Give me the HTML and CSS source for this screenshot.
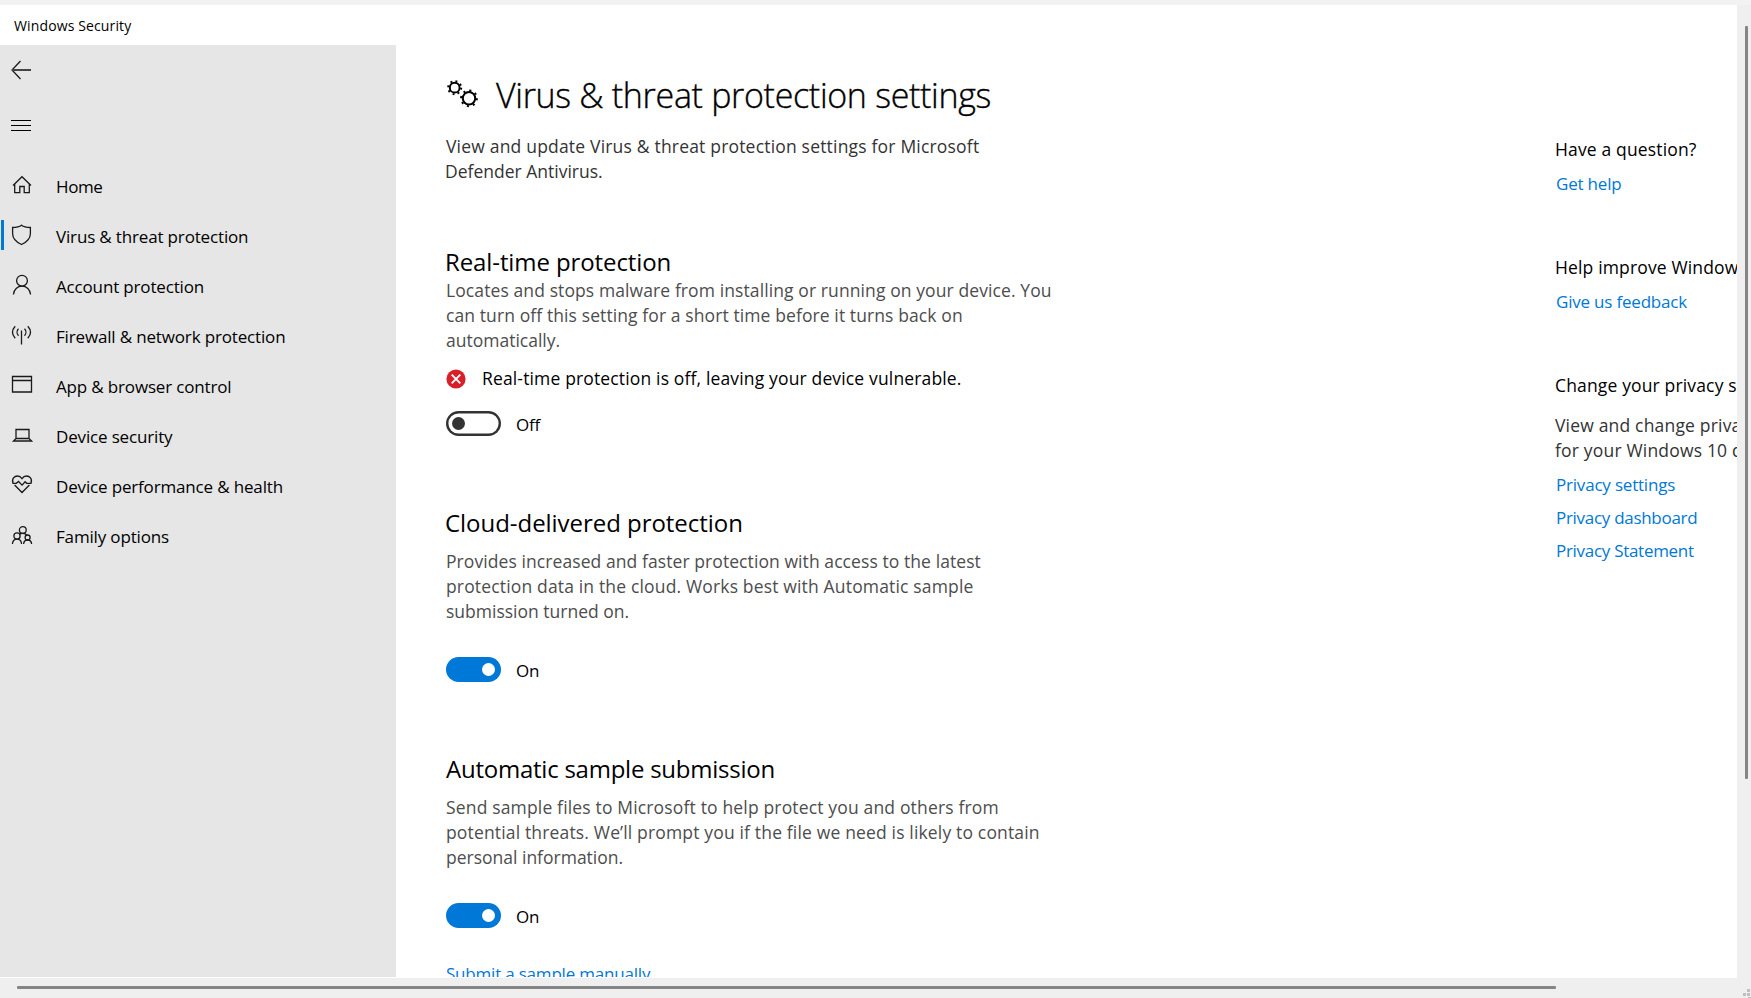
FILE: index.html
```html
<!DOCTYPE html>
<html lang="en">
<head>
<meta charset="utf-8">
<title>Windows Security</title>
<link rel="stylesheet" href="styles.css">
</head>
<body>
<div class="window">
  <header class="titlebar">Windows Security</header>
  <div class="body">
    <nav class="sidebar">
      <svg class="back" width="20" height="20" viewBox="0 0 20 20"><path d="M9.5 1 1 10l8.500 9"/><path class="shaft" d="M1 10h19"/></svg>
      <div class="burger"><i></i><i></i><i></i></div>
      <ul class="menu">
        <li class="item short"><svg class="icon" viewBox="0 0 22 22"><path d="M2 11.500 11 2.700l9 8.800M3.700 10v8.700h5.100v-6.200h4.400v6.200h5.100V10"/></svg><span>Home</span></li>
        <li class="item active"><svg class="icon" viewBox="0 0 22 22"><path d="M10.500 1.200C8 3.200 5 3.500 1.600 3.500v6c0 5 3.200 8.400 8.900 11 5.700-2.600 8.900-6 8.900-11v-6C16 3.500 13 3.200 10.500 1.200z"/></svg><span>Virus &amp; threat protection</span></li>
        <li class="item"><svg class="icon" viewBox="0 0 22 22"><circle cx="11" cy="6.700" r="5.400"/><path d="M2.400 20.500c.5-5 4-8.300 8.600-8.300s8.100 3.300 8.600 8.300"/></svg><span>Account protection</span></li>
        <li class="item"><svg class="icon" viewBox="0 0 22 22"><path d="M10.500 6.500v14M4.200 2.300C.8 6 .8 10.500 4.200 14.300M7.500 4.800c-1.900 2-1.900 5 0 7M16.800 2.300c3.400 3.700 3.400 8.200 0 12M13.500 4.800c1.900 2 1.900 5 0 7"/></svg><span>Firewall &amp; network protection</span></li>
        <li class="item"><svg class="icon" viewBox="0 0 22 22"><path d="M1.500 2.500h19v15.500h-19zM1.500 6.500h19"/></svg><span>App &amp; browser control</span></li>
        <li class="item"><svg class="icon" viewBox="0 0 22 22"><path d="M5 5.500h13v9H5zM5 14.500 2.500 17h18L18 14.500"/></svg><span>Device security</span></li>
        <li class="item"><svg class="icon" viewBox="0 0 22 22"><path d="M2 9.300C.3 4.600 3.600 2 6.500 2c2 0 3.400 1 4.500 2.600C12.100 3 13.500 2 15.500 2c2.900 0 6.200 2.600 4.500 7.300h-4.300l-1.600-1.600-3 3.400-3.600-3.600L5.300 9.300zM3.600 11l7.400 7.500 7.400-7.500"/></svg><span>Device performance &amp; health</span></li>
        <li class="item"><svg class="icon" viewBox="0 0 22 22"><circle cx="11.800" cy="6" r="3.400"/><circle cx="6" cy="12" r="3.100"/><circle cx="16.600" cy="13.500" r="2.500"/><path d="M1.400 20c.3-3.100 2-4.900 4.600-4.900s4.300 1.800 4.600 4.900M12.600 20c.2-2.600 1.700-4 4-4s3.800 1.400 4 4M8.500 10.300c.7-.6 1.800-.9 3.300-.9 2 0 3.500.8 4.300 1.900"/></svg><span>Family options</span></li>
      </ul>
    </nav>
    <main class="content">
      <h1 class="title">
        <svg class="gears" width="34" height="30" viewBox="0 0 34 30"><g class="ring"><circle cx="8.700" cy="8.700" r="4.900"/><circle cx="23" cy="19.300" r="6.200"/></g><g class="teeth"><circle cx="8.700" cy="8.700" r="6.500" stroke-dasharray="1.900 3.205"/><circle cx="23" cy="19.300" r="7.900" stroke-dasharray="2.100 4.105"/></g></svg>
        <span>Virus &amp; threat protection settings</span>
      </h1>
      <p class="intro">View and update Virus &amp; threat protection settings for Microsoft<br><span class="tail">Defender Antivirus.</span></p>

      <section class="setting">
        <h2>Real-time protection</h2>
        <p class="close">Locates and stops malware from installing or running on your device. You<br>can turn off this setting for a short time before it turns back on<br><span class="tail">automatically.</span></p>
        <div class="alert"><svg width="20" height="20" viewBox="0 0 20 20"><circle cx="10" cy="10" r="9.600"/><path d="m5.700 5.700 8.600 8.600m0-8.600-8.600 8.600"/></svg><span>Real-time protection is off, leaving your device vulnerable.</span></div>
        <div class="switch-row near"><span class="switch"><i></i></span><span>Off</span></div>
      </section>

      <section class="setting">
        <h2 class="wide">Cloud-delivered protection</h2>
        <p class="snug">Provides increased and faster protection with access to the latest<br><span class="loose">protection data in the cloud. Works best with Automatic sample</span><br><span class="tail">submission turned on.</span></p>
        <div class="switch-row"><span class="switch on"><i></i></span><span>On</span></div>
      </section>

      <section class="setting">
        <h2 class="narrow">Automatic sample submission</h2>
        <p class="loose">Send sample files to Microsoft to help protect you and others from<br>potential threats. We’ll prompt you if the file we need is likely to contain<br><span class="tail">personal information.</span></p>
        <div class="switch-row"><span class="switch on"><i></i></span><span>On</span></div>
        <a class="link submit">Submit a sample manually</a>
      </section>
    </main>
    <aside class="aside">
      <h3>Have a question?</h3>
      <a class="link">Get help</a>
      <h3 class="next">Help improve Windows Security</h3>
      <a class="link">Give us feedback</a>
      <h3 class="next">Change your privacy settings</h3>
      <p>View and change privacy settings<br>for your Windows 10 device.</p>
      <a class="link">Privacy settings</a>
      <a class="link stacked tight">Privacy dashboard</a>
      <a class="link stacked tight">Privacy Statement</a>
    </aside>
  </div>
  <div class="vbar"><div class="vthumb"></div></div>
  <div class="hbar"><div class="hthumb"></div><svg width="8" height="9" viewBox="0 0 8 9"><path d="M4 0h3v3H4zM0 4h3v3H0zM4 4h3v3H4zM5 8h3v1H5z"/></svg></div>
</div>
</body>
</html>
```
FILE: styles.css
```css
* { box-sizing: border-box; }
body {
  margin: 0;
  font-family: "Open Sans", "Noto Sans", sans-serif;
  font-size: 17px;
  line-height: 25px;
  color: #000;
  background: #fff;
}
h1, h2, h3, p, ul { margin: 0; padding: 0; font-weight: 400; }
.window {
  display: grid;
  grid-template-columns: 1737px 14px;
  grid-template-rows: 40px 933px 20px;
  width: 1751px;
  height: 998px;
  padding-top: 5px;
  background: #f2f2f2;
  overflow: hidden;
  white-space: nowrap;
}
.titlebar {
  padding-left: 14px;
  font-size: 14px;
  line-height: 41px;
  letter-spacing: .13px;
  background: #fff;
}
.body {
  grid-row: 2;
  display: flex;
  height: 933px;
  background: #fff;
  border-bottom: 1px solid #fff;
  overflow: hidden;
}
.sidebar { flex: none; width: 396px; background: #e6e6e6; }
.sidebar svg { fill: none; stroke: #1a1a1a; stroke-width: 1.3; }
.back { display: block; margin: 15px 0 0 11px; }
.sidebar .back .shaft { stroke: #444; stroke-width: 2; }
.burger { display: grid; gap: 4px; width: 20px; margin: 40px 0 0 11px; }
.burger i { height: 1px; background: #000; }
.menu { margin-top: 39px; list-style: none; }
.item {
  display: flex;
  align-items: center;
  height: 30px;
  margin-bottom: 20px;
  padding-left: 8px;
  border-left: 3px solid transparent;
  margin-left: 1px;
  letter-spacing: -.16px;
}
.item span { margin-left: 23px; padding-top: 2px; }
.item.active { border-color: #0078d7; }
.item.short { letter-spacing: -.4px; }
.icon { flex: none; width: 22px; height: 22px; margin: 0 0 1px -1px; }

.content { flex: none; width: 1109px; padding: 27px 0 0 50px; color: #000; }
.title { display: flex; height: 46px; line-height: 47px; font-size: 34px; font-weight: 300; letter-spacing: -.32px; -webkit-text-stroke: .35px #000; }
.title span { margin-left: 16px; }
.gears { flex: none; margin-top: 7px; fill: none; stroke: #000; }
.ring { stroke-width: 2; }
.teeth { stroke-width: 2; }
.content p { margin-top: 11px; font-size: 17.5px; letter-spacing: .1px; color: #4d4d4d; }
.content .snug { letter-spacing: .08px; }
.content .loose { letter-spacing: .16px; }
.content .intro { margin-top: 16px; color: #333; letter-spacing: .19px; }
.content p.close { margin-top: 1px; }
.content .tail { letter-spacing: 0; }
.intro .tail { margin-left: -1px; }
.setting { margin-top: 72px; }
.intro + .setting { margin-top: 63px; }
.setting h2 { height: 30px; margin-left: -1px; line-height: 30px; font-size: 24px; letter-spacing: -.1px; }
.setting h2.wide { letter-spacing: -.04px; }
.setting h2.narrow { margin-left: 0; letter-spacing: -.24px; }
.alert { display: flex; align-items: center; margin-top: 13px; font-size: 17.5px; letter-spacing: .15px; }
.alert span { margin-left: 16px; }
.alert svg { fill: #d9202a; }
.alert path { stroke: #fff; stroke-width: 1.9; }
.switch-row { display: flex; margin-top: 33px; letter-spacing: -.2px; }
.switch-row.near { margin-top: 20px; }
.switch-row > span:last-child { margin-left: 15px; padding-top: 1px; height: 25px; }
.switch {
  display: flex;
  align-items: center;
  width: 55px;
  height: 25px;
  padding: 0 6px;
  border-radius: 13px;
  box-shadow: inset 0 0 0 2.4px #333;
}
.switch i { width: 13px; height: 13px; border-radius: 50%; background: #333; }
.switch.on { justify-content: flex-end; background: #0078d7; box-shadow: none; }
.switch.on i { background: #fff; }
.link { display: block; color: #0078d7; letter-spacing: -.2px; }
.submit { margin-top: 33px; }

.aside { flex: none; width: 232px; padding: 92px 0 0 50px; overflow: hidden; }
.aside h3 { font-size: 17.5px; letter-spacing: .15px; }
.aside h3.next { margin-top: 59px; }
.aside p { margin-top: 15px; font-size: 17.5px; letter-spacing: .18px; color: #333; }
.aside .link { margin: 9px 0 0 1px; }
.aside .stacked { margin-top: 8px; }
.aside .tight { letter-spacing: -.29px; }

.vbar { grid-row: 1 / 4; grid-column: 2; padding: 21px 0 0 8px; background: #efefef; }
.vthumb { width: 3px; height: 753px; border-radius: 1px; background: #858585; }
.hbar { grid-row: 3; grid-column: 1 / 3; display: flex; justify-content: space-between; padding: 8px 0 0 17px; background: #efefef; }
.hthumb { width: 1539px; height: 3px; border-radius: 1px; background: #858585; }
.hbar svg { margin-top: 3px; fill: #bfbfbf; }
```
